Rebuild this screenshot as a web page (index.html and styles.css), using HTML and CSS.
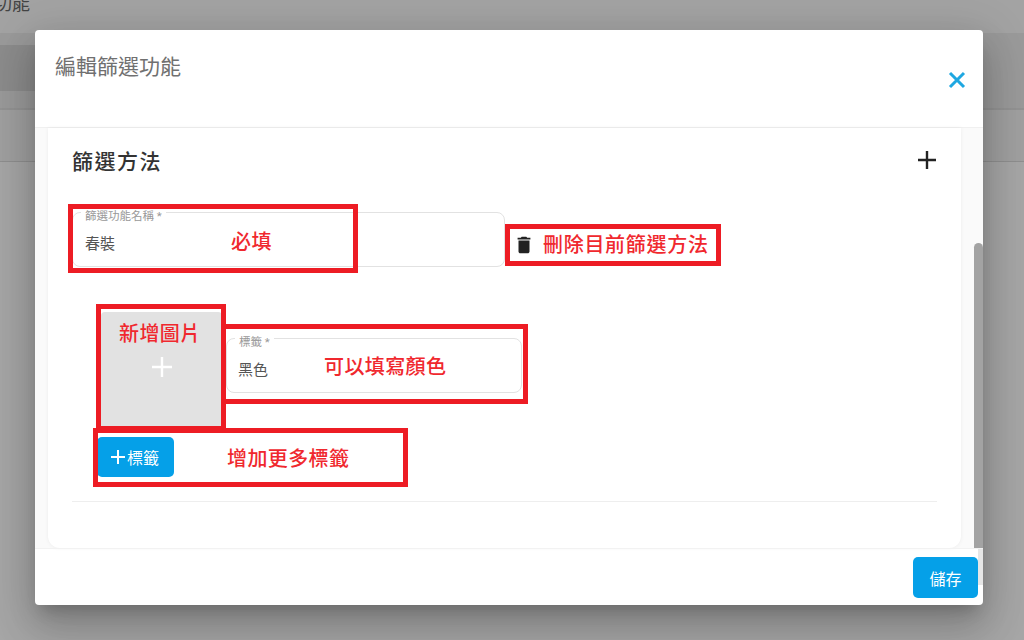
FILE: index.html
```html
<!DOCTYPE html>
<html lang="zh-Hant">
<head>
  <meta charset="UTF-8">
  <title>編輯篩選功能</title>
  <link rel="stylesheet" href="styles.css">
</head>
<body>

<div class="backdrop">
  <div class="page-title"><span>功能</span></div>
  <div class="page-section"><div class="page-band"></div></div>
  <div class="page-row"></div>
</div>

<div class="modal">
  <header class="modal-head">
    <h2>編輯篩選功能</h2>
    <svg class="close" viewBox="0 0 18 18"><path d="M2 2L16 16M16 2L2 16"/></svg>
  </header>

  <div class="modal-body">
    <section class="card">
      <div class="card-head">
        <h3>篩選方法</h3>
        <svg class="add" viewBox="0 0 20 20"><path d="M10 1V19M1 10H19"/></svg>
      </div>

      <div class="method-row">
        <div class="field field-name">
          <span class="field-label">篩選功能名稱 *</span>
          <span class="field-value">春裝</span>
        </div>
        <svg class="trash" viewBox="0 0 24 24"><path d="M6 19c0 1.100.9 2 2 2h8c1.100 0 2-.9 2-2V7H6v12zM19 4h-3.500l-1-1h-5l-1 1H5v2h14V4z"/></svg>
      </div>

      <div class="tag-row">
        <div class="image-box">
          <svg viewBox="0 0 20 20"><path d="M10 0V20M0 10H20"/></svg>
        </div>
        <div class="field field-tag">
          <span class="field-label">標籤 *</span>
          <span class="field-value">黑色</span>
        </div>
      </div>

      <button class="btn btn-tag"><svg viewBox="0 0 14 14"><path d="M7 0V14M0 7H14"/></svg>標籤</button>

      <div class="divider"></div>
    </section>
    <div class="scroll-thumb"></div>
  </div>

  <footer class="modal-foot">
    <button class="btn btn-save">儲存</button>
  </footer>

  <div class="mark mark-name"><span class="note">必填</span></div>
  <div class="mark mark-delete"><span class="note note-wide">刪除目前篩選方法</span></div>
  <div class="mark mark-image"><span class="note">新增圖片</span></div>
  <div class="mark mark-tag"><span class="note">可以填寫顏色</span></div>
  <div class="mark mark-more"><span class="note">增加更多標籤</span></div>
</div>

</body>
</html>
```

FILE: styles.css
```css
* {
  box-sizing: border-box;
}

html, body {
  height: 100%;
}

body {
  margin: 0;
  overflow: hidden;
  background-color: #a6a6a6;
  font-family: "Roboto", "Noto Sans CJK TC", sans-serif;
  color: #333;
}

.backdrop {
  height: 100%;
  display: flex;
  flex-direction: column;
}

.page-title {
  height: 33px;
  flex: none;
  background-color: #a3a3a3;
  overflow: hidden;
}

.page-title span {
  display: block;
  margin: -11px 0 0 -6px;
  font-size: 18px;
  line-height: 30px;
  color: #444;
}

.page-section {
  height: 77px;
  flex: none;
  padding-top: 12px;
  background-color: #9a9a9a;
  border-bottom: 2px solid #939393;
}

.page-band {
  width: 200px;
  height: 46px;
  background-color: #8c8c8c;
}

.page-row {
  height: 52px;
  flex: none;
  background-color: #a0a0a0;
  border-bottom: 1px solid #8f8f8f;
}

.modal {
  position: absolute;
  left: 35px;
  top: 30px;
  width: 948px;
  height: 575px;
  display: flex;
  flex-direction: column;
  background-color: #fff;
  border-radius: 4px;
  box-shadow: 0 11px 15px -7px rgba(0, 0, 0, 0.2), 0 24px 38px 3px rgba(0, 0, 0, 0.14), 0 9px 46px 8px rgba(0, 0, 0, 0.12);
}

.modal-head {
  height: 98px;
  flex: none;
  display: flex;
  justify-content: space-between;
  padding: 21px 17px 0 20px;
  border-bottom: 1px solid #f0f0f0;
}

.modal-head h2 {
  margin: 0;
  font-size: 21px;
  line-height: 32px;
  font-weight: 400;
  color: #707070;
}

.close {
  width: 18px;
  height: 18px;
  margin-top: 20px;
  fill: none;
  stroke: #1ea7e1;
  stroke-width: 3;
}

.modal-body {
  flex: 1;
  min-height: 0;
  padding: 0 22px 0 13px;
  background-color: #fafafa;
  position: relative;
}

.card {
  height: 100%;
  padding: 0 24px;
  background-color: #fff;
  border-radius: 0 0 12px 12px;
  box-shadow: 0 0 4px rgba(0, 0, 0, 0.06);
}

.card-head {
  display: flex;
  justify-content: space-between;
  align-items: center;
  height: 63px;
}

.card-head h3 {
  margin: 0;
  font-size: 21px;
  font-weight: 500;
  letter-spacing: 1.5px;
  color: #333;
}

.add {
  width: 20px;
  height: 20px;
  fill: none;
  stroke: #222;
  stroke-width: 2.4;
}

.method-row {
  display: flex;
  align-items: center;
  margin-top: 21px;
}

.field {
  position: relative;
  height: 55px;
  border: 1px solid #e2e2e2;
  border-radius: 8px;
  display: flex;
  align-items: center;
}

.field-name {
  width: 433px;
  padding-left: 12px;
}

.field-tag {
  width: 296px;
  margin: 26px 0 0 4px;
  padding-left: 11px;
}

.field-label {
  position: absolute;
  left: 8px;
  top: -3px;
  padding: 0 4px;
  background-color: #fff;
  font-size: 11.500px;
  line-height: 12px;
  color: #999;
}

.field-value {
  font-size: 15px;
  color: #555;
  padding-top: 6px;
}

.trash {
  width: 22px;
  height: 22px;
  margin: 10px 0 0 8px;
  fill: #222;
}

.tag-row {
  display: flex;
  margin: 45px 0 0 29px;
}

.image-box {
  width: 121px;
  height: 120px;
  padding-top: 45px;
  background-color: #e2e2e2;
  border-radius: 4px;
  text-align: center;
}

.image-box svg {
  width: 20px;
  height: 20px;
  fill: none;
  stroke: #fff;
  stroke-width: 2.4;
}

.btn {
  border: none;
  border-radius: 5px;
  background-color: #05a0e8;
  color: #fff;
  font-family: inherit;
  font-size: 16px;
}

.btn-tag {
  display: flex;
  align-items: center;
  gap: 2px;
  width: 77px;
  height: 40px;
  margin: 5px 0 0 25px;
  padding: 0 0 0 14px;
}

.btn-tag svg {
  width: 14px;
  height: 14px;
  fill: none;
  stroke: #fff;
  stroke-width: 2;
}

.divider {
  margin-top: 24px;
  border-top: 1px solid #eee;
}

.scroll-thumb {
  position: absolute;
  right: 0;
  top: 115px;
  bottom: 0;
  width: 9px;
  background-color: #a3a3a3;
  border-radius: 5px 5px 0 0;
}

.modal-foot {
  height: 57px;
  flex: none;
  display: flex;
  justify-content: flex-end;
  padding: 8px 5px 0 0;
  border-top: 1px solid #f2f2f2;
  position: relative;
}

.modal-foot::after {
  content: "";
  position: absolute;
  right: 0;
  top: 0;
  width: 5px;
  height: 36px;
  background-color: #e6e6e6;
}

.btn-save {
  width: 65px;
  height: 41px;
}

/* red annotations drawn over the screenshot */
.mark {
  position: absolute;
  border: 5px solid #ed1c24;
  display: flex;
  align-items: center;
}

.note {
  color: #f0282e;
  font-size: 20px;
  font-weight: 500;
  letter-spacing: 0.4px;
  white-space: nowrap;
  line-height: 1;
}

.note-wide {
  letter-spacing: 0.7px;
}

.mark-name {
  left: 33px;
  top: 174px;
  width: 290px;
  height: 69px;
  padding: 7px 0 0 158px;
}

.mark-delete {
  left: 470px;
  top: 194px;
  width: 216px;
  height: 42px;
  padding-left: 33px;
}

.mark-image {
  left: 61px;
  top: 274px;
  width: 130px;
  height: 127px;
  align-items: flex-start;
  padding: 15px 0 0 18px;
}

.mark-tag {
  left: 191px;
  top: 294px;
  width: 302px;
  height: 80px;
  border-left: none;
  padding: 6px 0 0 98px;
}

.mark-more {
  left: 58px;
  top: 398px;
  width: 315px;
  height: 59px;
  padding: 2px 0 0 129px;
}
```
